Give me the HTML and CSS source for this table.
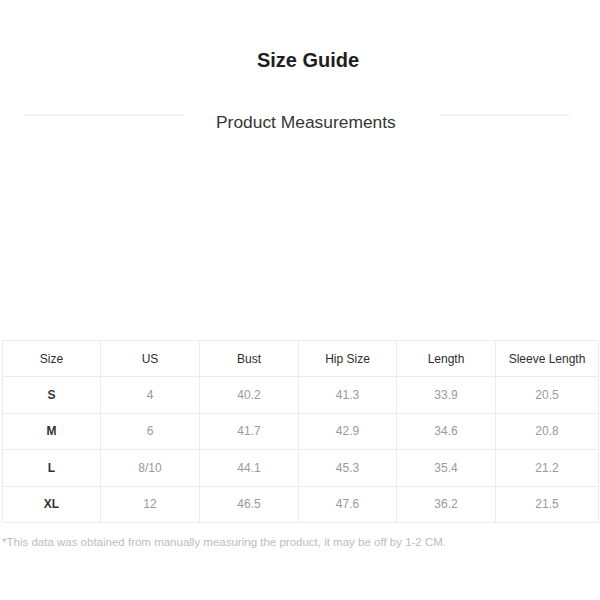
FILE: index.html
```html
<!DOCTYPE html>
<html lang="en">
<head>
<meta charset="utf-8">
<title>Size Guide</title>
<link rel="stylesheet" href="styles.css">
</head>
<body>
<div class="page">
  <h1 class="title">Size Guide</h1>
  <div class="subhead">
    <span class="rule rule-left"></span>
    <h2 class="subtitle">Product Measurements</h2>
    <span class="rule rule-right"></span>
  </div>
  <table class="sizes">
    <colgroup>
      <col class="c-size"><col class="c-us"><col class="c-bust"><col class="c-hip"><col class="c-len"><col class="c-sleeve">
    </colgroup>
    <thead>
      <tr><th>Size</th><th>US</th><th>Bust</th><th>Hip Size</th><th>Length</th><th>Sleeve Length</th></tr>
    </thead>
    <tbody>
      <tr><td class="size">S</td><td>4</td><td>40.2</td><td>41.3</td><td>33.9</td><td>20.5</td></tr>
      <tr><td class="size">M</td><td>6</td><td>41.7</td><td>42.9</td><td>34.6</td><td>20.8</td></tr>
      <tr><td class="size">L</td><td>8/10</td><td>44.1</td><td>45.3</td><td>35.4</td><td>21.2</td></tr>
      <tr><td class="size">XL</td><td>12</td><td>46.5</td><td>47.6</td><td>36.2</td><td>21.5</td></tr>
    </tbody>
  </table>
  <p class="note">*This data was obtained from manually measuring the product, it may be off by 1-2 CM.</p>
</div>
</body>
</html>
```
FILE: styles.css
```css
html, body {
  margin: 0;
  padding: 0;
  background: #fff;
}
body {
  font-family: "Liberation Sans", Arial, sans-serif;
}
.page {
  width: 600px;
  padding-top: 49px;
}
.title {
  margin: 0;
  padding-left: 16px;
  text-align: center;
  font-size: 20px;
  line-height: 23px;
  font-weight: bold;
  color: #1e1e1e;
}
.subhead {
  display: flex;
  align-items: flex-start;
  margin-top: 40px;
  padding-left: 24px;
}
.rule {
  display: block;
  height: 2px;
  margin-top: 2px;
  background: #f3f3f3;
}
.rule-left {
  width: 160px;
  margin-right: 32px;
}
.rule-right {
  width: 130px;
  margin-left: 44px;
}
.subtitle {
  margin: 0;
  font-size: 17.4px;
  line-height: 20px;
  font-weight: normal;
  color: #363636;
  white-space: nowrap;
}
.sizes {
  margin: 208px 2px 0;
  width: 596px;
  border-collapse: collapse;
  table-layout: fixed;
  font-size: 12px;
}
.c-size { width: 98px; }
.c-us { width: 99px; }
.c-bust { width: 99px; }
.c-hip { width: 98px; }
.c-len { width: 99px; }
.c-sleeve { width: 103px; }
.sizes th,
.sizes td {
  height: 35.4px;
  padding: 0;
  border: 1px solid #ececec;
  text-align: center;
  vertical-align: middle;
}
.sizes th {
  font-weight: normal;
  color: #2e2e2e;
}
.sizes td {
  color: #9a9a9a;
}
.sizes td.size {
  color: #333;
  font-weight: bold;
}
.note {
  margin: 12px 0 0 2px;
  font-size: 11.5px;
  line-height: 14px;
  color: #bdbdbd;
}
```
